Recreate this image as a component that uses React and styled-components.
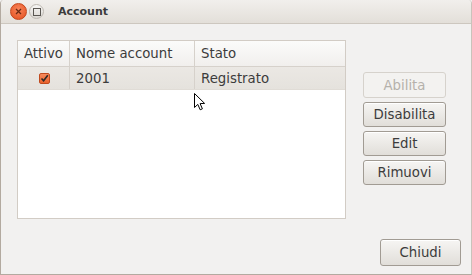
import React from "react";
import styled, { createGlobalStyle } from "styled-components";

const Global = createGlobalStyle`
  html, body { margin: 0; padding: 0; background: #f2f1f0; }
  body { font-family: "DejaVu Sans", "Noto Sans", sans-serif; }
`;

const Window = styled.div`
  position: relative;
  width: 472px;
  height: 275px;
  box-sizing: border-box;
  background: #f2f1f0;
  border-left: 1px solid #b3aaa0;
  border-right: 1px solid #c9c3bb;
  border-bottom: 1px solid #b3aaa0;
  border-radius: 4px 4px 0 0;
  overflow: hidden;
  display: flex;
  flex-direction: column;
  color: #3c3c3c;
`;

const TitleBar = styled.div`
  height: 23px;
  flex: none;
  display: flex;
  align-items: center;
  padding-left: 9px;
  background: linear-gradient(#f1efec, #e3dfd9);
  border-bottom: 1px solid #cdc7bf;
`;

const WinButton = styled.div`
  width: ${(p) => p.size}px;
  height: ${(p) => p.size}px;
  border-radius: 50%;
  box-sizing: border-box;
  margin-right: ${(p) => p.gap}px;
  display: flex;
  align-items: center;
  justify-content: center;
  background: ${(p) =>
    p.close
      ? "radial-gradient(circle at 50% 35%, #f9845a, #e2501e)"
      : "linear-gradient(#f7f6f4, #dcd9d4)"};
  border: 1px solid ${(p) => (p.close ? "#c4461c" : "#bdb8b1")};
`;

const Title = styled.div`
  font-family: "DejaVu Sans", sans-serif;
  font-weight: bold;
  font-size: 11px;
  color: #3c3c3c;
  margin-left: 14px;
`;

const Body = styled.div`
  flex: 1;
  display: flex;
  flex-direction: column;
  padding: 16px 9px 0 16px;
`;

const Main = styled.div`
  display: flex;
  align-items: flex-start;
`;

const Tree = styled.div`
  width: 329px;
  height: 179px;
  box-sizing: border-box;
  border: 1px solid #d2ccc5;
  background: #ffffff;
  display: flex;
  flex-direction: column;
`;

const Row = styled.div`
  display: grid;
  grid-template-columns: 52px 125px 1fr;
  height: ${(p) => p.h}px;
  box-sizing: border-box;
  background: ${(p) =>
    p.header ? "linear-gradient(#fbfbfa, #f1efed)" : "linear-gradient(#ebe8e4, #e5e2dd)"};
  border-bottom: 1px solid ${(p) => (p.header ? "#d6d1cb" : "#e0dcd6")};
`;

const Cell = styled.div`
  display: flex;
  align-items: center;
  justify-content: ${(p) => (p.center ? "center" : "flex-start")};
  padding-left: ${(p) => (p.center ? 0 : 6)}px;
  font-size: 13.3px;
  color: #3c3c3c;
  white-space: nowrap;
  border-right: ${(p) => (p.sep ? "1px solid #d6d1cb" : "none")};
`;

const Check = styled.div`
  width: 11px;
  height: 11px;
  box-sizing: border-box;
  border: 1px solid #c04a1e;
  border-radius: 2px;
  background: linear-gradient(#f58a5c, #e9622d);
  display: flex;
  align-items: center;
  justify-content: center;
  margin-left: 2px;
  margin-top: 1px;
`;

const Side = styled.div`
  display: flex;
  flex-direction: column;
  gap: 4px;
  margin-left: 17px;
  padding-top: 32px;
`;

const Button = styled.button`
  width: ${(p) => p.w || 83}px;
  height: ${(p) => p.h || 25}px;
  box-sizing: border-box;
  padding: 0;
  font-family: "DejaVu Sans", sans-serif;
  font-size: 13.3px;
  border-radius: 3px;
  color: ${(p) => (p.disabled ? "#b5b1ab" : "#3c3c3c")};
  border: 1px solid ${(p) => (p.disabled ? "#d6d2cc" : "#a19b93")};
  background: ${(p) =>
    p.disabled ? "#f3f2f0" : "linear-gradient(#f6f5f3, #e1ded9)"};
  box-shadow: ${(p) => (p.disabled ? "none" : "inset 0 1px 0 #ffffff")};
`;

const Footer = styled.div`
  display: flex;
  justify-content: flex-end;
  margin-top: 20px;
  padding-right: 1px;
`;

const Cursor = styled.svg`
  position: absolute;
  left: 192px;
  top: 92px;
`;

export default function App() {
  return (
    <>
      <Global />
      <Window>
        <TitleBar>
          <WinButton close size={17} gap={2}>
            <svg width="7" height="7" viewBox="0 0 7 7">
              <path d="M1 1L6 6M6 1L1 6" stroke="#6a2a12" strokeWidth="1.3" />
            </svg>
          </WinButton>
          <WinButton size={15} gap={0}>
            <svg width="8" height="8" viewBox="0 0 8 8">
              <rect x="0.5" y="0.5" width="7" height="7" fill="none" stroke="#5a5752" strokeWidth="1" />
            </svg>
          </WinButton>
          <Title>Account</Title>
        </TitleBar>
        <Body>
          <Main>
            <Tree>
              <Row header h={26}>
                <Cell sep>Attivo</Cell>
                <Cell sep>Nome account</Cell>
                <Cell>Stato</Cell>
              </Row>
              <Row h={23}>
                <Cell sep center>
                  <Check>
                    <svg width="9" height="9" viewBox="0 0 9 9">
                      <path d="M1.5 4.5L3.6 6.8L7.8 1.2" fill="none" stroke="#2d2a27" strokeWidth="1.6" />
                    </svg>
                  </Check>
                </Cell>
                <Cell sep>2001</Cell>
                <Cell>Registrato</Cell>
              </Row>
            </Tree>
            <Side>
              <Button disabled h={26}>Abilita</Button>
              <Button>Disabilita</Button>
              <Button>Edit</Button>
              <Button>Rimuovi</Button>
            </Side>
          </Main>
          <Footer>
            <Button w={81} h={27}>Chiudi</Button>
          </Footer>
        </Body>
        <Cursor width="13" height="20" viewBox="0 0 13 20">
          <path
            d="M1.5 1.5L1.5 15.5L4.8 12.4L7.2 17.8L9.4 16.8L7.1 11.6L11.6 11.4Z"
            fill="#ffffff"
            stroke="#000000"
            strokeWidth="1"
            strokeLinejoin="round"
          />
        </Cursor>
      </Window>
    </>
  );
}
